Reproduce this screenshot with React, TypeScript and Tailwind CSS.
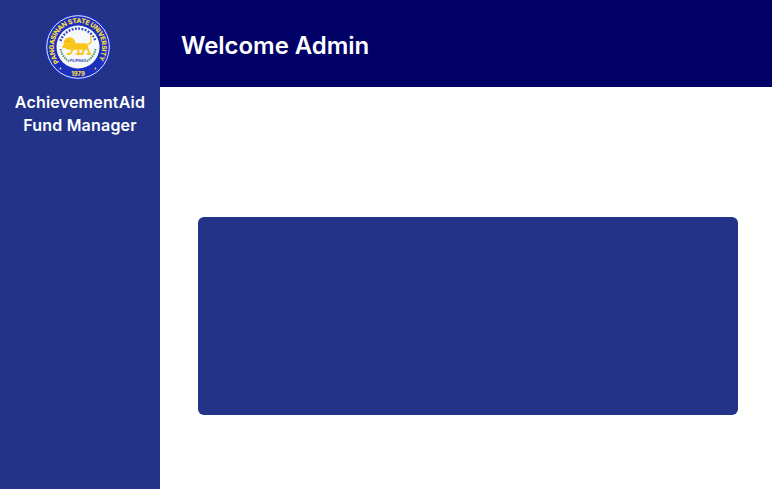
import React from "react";

const Seal = () => (
  <svg width="66" height="66" viewBox="0 0 66 66" className="-ml-1">
    <defs>
      <path id="seal-top" d="M14.100 47.800 A24 24 0 1 1 51.900 47.800" />
    </defs>
    <circle cx="33" cy="33" r="33" fill="#1c30c0" />
    <circle cx="33" cy="33" r="31.300" fill="none" stroke="#dfe5f7" strokeWidth="1" />
    <circle cx="33" cy="33" r="21.500" fill="#f7f8fc" />
    {/* stars along the top, laurels at the sides */}
    <path d="M15.500 27a18.500 18.500 0 0 1 35 0" fill="none" stroke="#2a44c6" strokeWidth="2.400" strokeDasharray="1.800 1.500" />
    <path d="M15.500 35a18 18 0 0 0 9 12.500M50.500 35a18 18 0 0 1-9 12.500" fill="none" stroke="#4a9a68" strokeWidth="2" strokeDasharray="1.500 0.800" />
    <text fontFamily="Inter, sans-serif" fontSize="6.700" fontWeight="800" fill="#f8dc3e">
      <textPath href="#seal-top" textLength="104" lengthAdjust="spacing">PANGASINAN STATE UNIVERSITY</textPath>
    </text>
    <text x="33" y="62" textAnchor="middle" fontFamily="Inter, sans-serif" fontSize="5.800" fontWeight="800" fill="#f8dc3e">1979</text>
    <circle cx="15.500" cy="54.500" r="0.900" fill="#f8dc3e" />
    <circle cx="50.500" cy="54.500" r="0.900" fill="#f8dc3e" />
    {/* lion */}
    <g fill="none" stroke="#f7c61f" strokeLinecap="round" strokeLinejoin="round">
      <path d="M27 32.500h13" strokeWidth="6.500" />
      <path d="M28 35l-3 5h-2.500M33 36l1 4h-2.500M39 35l-1.500 5H35M42 34l3 6h-2.500" strokeWidth="2" />
      <path d="M43 30c2.500 0 3.500-1.500 3-4l-.5-3 2-1" strokeWidth="1.300" />
    </g>
    <ellipse cx="24.500" cy="29.500" rx="6" ry="6.300" fill="#f7c61f" />
    <path d="M19 31l-2.200 1 1 2 3.700.5 2-3z" fill="#f7c61f" />
    <path d="M20 28c1.500-1.500 3.500-1.500 5 0" fill="none" stroke="#dd9f10" strokeWidth="0.800" />
    <text x="33" y="47.500" textAnchor="middle" fontFamily="Inter, sans-serif" fontSize="3.400" fontWeight="600" fill="#1c30c0">PILIPINAS</text>
  </svg>
);

export default function App() {
  return (
    <div className="flex h-[489px] w-[772px] overflow-hidden bg-white font-['Inter',sans-serif]">
      <aside className="flex w-40 shrink-0 flex-col items-center bg-[#223388] pt-3.5">
        <Seal />
        <h2 className="mt-[11px] text-center text-base leading-[23px] font-semibold tracking-[0.2px] text-white">
          AchievementAid
          <br />
          Fund Manager
        </h2>
      </aside>
      <div className="flex flex-1 flex-col">
        <header className="flex h-[87px] items-center bg-[#000066] pt-1 pl-[21px]">
          <h1 className="text-2xl font-semibold tracking-[-0.05px] text-white">Welcome Admin</h1>
        </header>
        <main className="flex-1 pt-[130px] pr-[34px] pl-[38px]">
          <div className="h-[198px] rounded-md bg-[#223388]" />
        </main>
      </div>
    </div>
  );
}
